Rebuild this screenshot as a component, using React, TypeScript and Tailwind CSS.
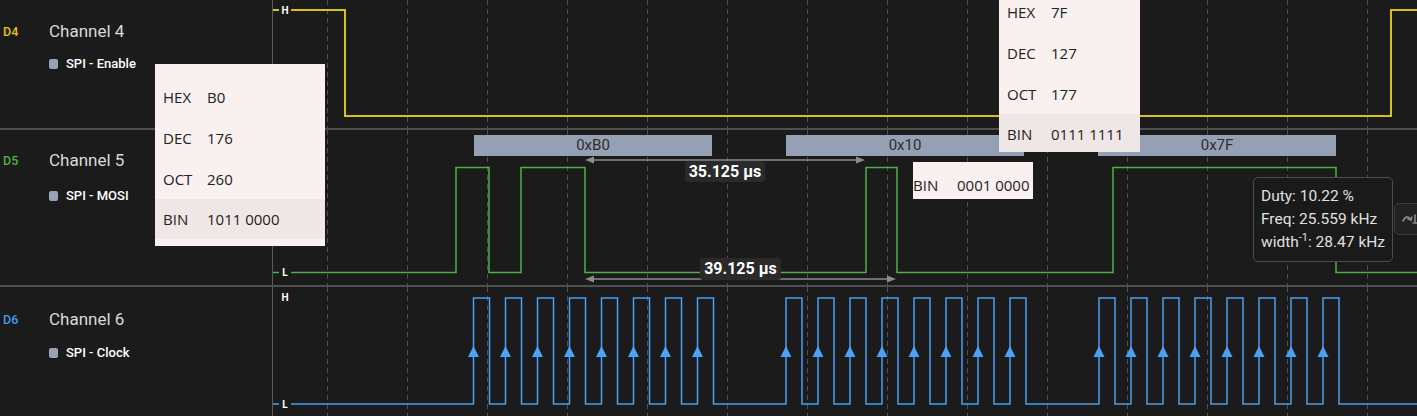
import React from 'react';

const GRID_X = Array.from({ length: 14 }, (_, i) => 327 + i * 80);

// byte start positions of the three SPI frames (rising edge of first clock)
const BYTE_STARTS = [473.5, 786, 1099];
const CLOCK_EDGES = BYTE_STARTS.flatMap((s) => Array.from({ length: 8 }, (_, i) => s + i * 32));

function clockPath() {
  let d = 'M273 404';
  for (const x of CLOCK_EDGES) d += ` H${x} V298 H${x + 16} V404`;
  return d + ' H1417';
}

function Grid({ y0, y1 }: { y0: number; y1: number }) {
  return (
    <g stroke="#4e4e4e" strokeWidth="1" strokeDasharray="5 4">
      {GRID_X.map((x) => (
        <line key={x} x1={x + 0.5} y1={y0} x2={x + 0.5} y2={y1} />
      ))}
    </g>
  );
}

function Measure({ x1, x2, y }: { x1: number; x2: number; y: number }) {
  return (
    <g fill="#8c8c8c" stroke="#8c8c8c">
      <line x1={x1 + 4} y1={y} x2={x2 - 4} y2={y} strokeWidth="1.5" />
      <polygon points={`${x1},${y} ${x1 + 9},${y - 3.5} ${x1 + 9},${y + 3.5}`} stroke="none" />
      <polygon points={`${x2},${y} ${x2 - 9},${y - 3.5} ${x2 - 9},${y + 3.5}`} stroke="none" />
    </g>
  );
}

type RowProps = {
  tag: string;
  tagClass: string;
  name: string;
  sub: string;
  rowClass: string;
  padClass: string;
  subClass: string;
  viewBox: string;
  children: React.ReactNode;
};

function ChannelRow({ tag, tagClass, name, sub, rowClass, padClass, subClass, viewBox, children }: RowProps) {
  return (
    <div className={`flex ${rowClass}`}>
      <div className={`relative w-[273px] shrink-0 border-r border-[#5a5a5a] ${padClass}`}>
        <div className="flex h-[22px] items-center">
          <span className={`w-[49px] pl-[3px] text-[12.5px] font-medium ${tagClass}`}>{tag}</span>
          <span className="text-[17px] text-[#d9d9d9]">{name}</span>
        </div>
        <div className={`flex h-[16px] items-center pl-[49px] ${subClass}`}>
          <span className="h-[10px] w-[9px] rounded-[2px] bg-[#9aa3b6]" />
          <span className="ml-[8px] text-[13px] font-medium text-white">{sub}</span>
        </div>
      </div>
      <svg className="block h-full flex-1" viewBox={viewBox} preserveAspectRatio="none">
        {children}
      </svg>
    </div>
  );
}

function ValueTip({ rows, className }: { rows: [string, string, string][]; className: string }) {
  return (
    <div className={`absolute bg-[#f8f1f0] font-['Open_Sans',sans-serif] text-[15px] text-[#222] ${className}`}>
      {rows.map(([k, v, h]) => (
        <div key={k} className={`flex items-center px-[8px] ${h} ${k === 'BIN' ? 'bg-[#efe7e6]' : ''}`}>
          <span className="w-[44px]">{k}</span>
          <span>{v}</span>
        </div>
      ))}
    </div>
  );
}

function Level({ t, className }: { t: string; className: string }) {
  return (
    <div className={`absolute flex h-[13px] w-[12px] items-center justify-center bg-[#1b1b1b] text-[10px] font-bold text-white ${className}`}>
      {t}
    </div>
  );
}

function ByteBar({ label, className }: { label: string; className: string }) {
  return (
    <div className={`absolute top-[135px] flex h-[21px] items-center justify-center bg-[#96a0b4] text-[15px] text-[#2e2e2e] ${className}`}>
      {label}
    </div>
  );
}

export default function App() {
  return (
    <div className="relative h-[416px] w-[1417px] overflow-hidden bg-[#1b1b1b] font-['Roboto',sans-serif]">
      {/* Channel 4 — SPI Enable */}
      <ChannelRow
        tag="D4"
        tagClass="text-[#e2c512]"
        name="Channel 4"
        sub="SPI - Enable"
        rowClass="h-[128px]"
        padClass="pt-[21px]"
        subClass="mt-[13px]"
        viewBox="273 0 1144 128"
      >
        <Grid y0={0} y1={128} />
        <path d="M273 10 H345 V116 H1391 V10 H1417" fill="none" stroke="#d6c21c" strokeWidth="2" />
      </ChannelRow>
      <div className="h-[2px] bg-[#4f4f4f]" />

      {/* Channel 5 — SPI MOSI */}
      <ChannelRow
        tag="D5"
        tagClass="text-[#4fb04a]"
        name="Channel 5"
        sub="SPI - MOSI"
        rowClass="h-[155px]"
        padClass="pt-[20px]"
        subClass="mt-[16px]"
        viewBox="273 130 1144 155"
      >
        <Grid y0={130} y1={285} />
        <path
          d="M273 272.5 H456 V167.5 H489 V272.5 H521 V167.5 H585 V272.5 H866 V167.5 H897 V272.5 H1113 V167.5 H1336 V272.5 H1417"
          fill="none"
          stroke="#52ad4c"
          strokeWidth="1.5"
        />
        <Measure x1={585} x2={865} y={160} />
        <Measure x1={585} x2={896} y={279} />
      </ChannelRow>
      <div className="h-[2px] bg-[#4f4f4f]" />

      {/* Channel 6 — SPI Clock */}
      <ChannelRow
        tag="D6"
        tagClass="text-[#3f9bf0]"
        name="Channel 6"
        sub="SPI - Clock"
        rowClass="h-[129px]"
        padClass="pt-[22px]"
        subClass="mt-[14px]"
        viewBox="273 287 1144 129"
      >
        <Grid y0={287} y1={416} />
        <path d={clockPath()} fill="none" stroke="#4a9ff2" strokeWidth="1.5" />
        <g fill="#4aa3f8">
          {CLOCK_EDGES.map((x) => (
            <polygon key={x} points={`${x - 5.5},357 ${x},346 ${x + 5.5},357`} />
          ))}
        </g>
      </ChannelRow>

      {/* level markers */}
      <Level t="H" className="left-[279px] top-[4px]" />
      <Level t="L" className="left-[279px] top-[266px]" />
      <Level t="H" className="left-[279px] top-[291px]" />
      <Level t="L" className="left-[279px] top-[398px]" />

      {/* decoded bytes */}
      <ByteBar label="0xB0" className="left-[474px] w-[238px]" />
      <ByteBar label="0x10" className="left-[786px] w-[238px]" />
      <ByteBar label="0x7F" className="left-[1098px] w-[238px]" />

      {/* measurement labels */}
      <div className="absolute left-[685px] top-[161px] flex h-[21px] w-[80px] items-center justify-center rounded-[3px] bg-[#2a2a2a] text-[16px] font-bold text-white">
        35.125 µs
      </div>
      <div className="absolute left-[700px] top-[258px] flex h-[22px] w-[81px] items-center justify-center rounded-[3px] bg-[#2a2a2a] text-[16px] font-bold text-white">
        39.125 µs
      </div>

      {/* value tooltips */}
      <ValueTip
        className="left-[155px] top-[64px] w-[170px] pb-[7px] pt-[13px]"
        rows={[
          ['HEX', 'B0', 'h-[41px]'],
          ['DEC', '176', 'h-[41px]'],
          ['OCT', '260', 'h-[40px]'],
          ['BIN', '1011 0000', 'h-[40px]'],
        ]}
      />
      <ValueTip
        className="left-[999px] top-[-8px] w-[141px]"
        rows={[
          ['HEX', '7F', 'h-[41px]'],
          ['DEC', '127', 'h-[41px]'],
          ['OCT', '177', 'h-[40px]'],
          ['BIN', '0111 1111', 'h-[38px] pt-[3px]'],
        ]}
      />
      <div className="absolute left-[913px] top-[162px] flex h-[37px] w-[120px] items-center bg-[#f8f1f0] pt-[9px] font-['Open_Sans',sans-serif] text-[15px] text-[#222]">
        <span className="w-[44px]">BIN</span>
        <span>0001 0000</span>
      </div>

      {/* pulse stats popup */}
      <div className="absolute left-[1253px] top-[177px] h-[85px] w-[140px] rounded-[5px] border border-[#4d4d4d] bg-[#1a1a1a] px-[7px] pt-[7px] text-[15.5px] leading-[23px] text-[#e0e0e0]">
        <div>Duty: 10.22 %</div>
        <div>Freq: 25.559 kHz</div>
        <div>
          width<sup className="top-[-6px] text-[11px]">-1</sup>: 28.47 kHz
        </div>
      </div>
      <div className="absolute left-[1394px] top-[203px] flex h-[32px] w-[40px] items-center rounded-[5px] border border-[#3a3a3a] bg-[#222] pl-[6px]">
        <svg width="18" height="14" viewBox="0 0 18 14" fill="none" stroke="#8a8a8a" strokeWidth="1.6" strokeLinecap="round">
          <path d="M2 9 C4 4 8 4 10 8" />
          <path d="M10 8 L11 5 M10 8 L7 7" />
          <path d="M14 3 V11 M12 11 H16" />
        </svg>
      </div>
    </div>
  );
}
